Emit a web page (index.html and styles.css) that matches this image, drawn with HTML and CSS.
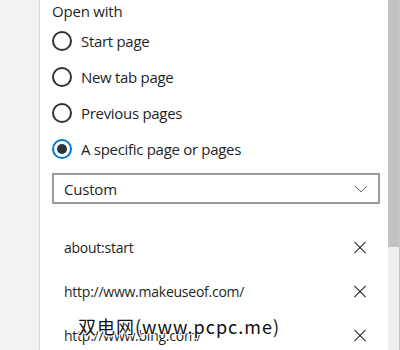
FILE: index.html
```html
<!DOCTYPE html>
<html lang="en">
<head>
    <meta charset="UTF-8">
    <meta name="viewport" content="width=device-width, initial-scale=1.0">
    <title>Open with</title>
    <link rel="stylesheet" href="styles.css">
</head>
<body>
    <div class="app">
        <div class="sidebar"></div>

        <div class="panel">
            <p class="heading">Open with</p>

            <label class="option"><span class="radio"></span>Start page</label>
            <label class="option"><span class="radio"></span>New tab page</label>
            <label class="option"><span class="radio"></span>Previous pages</label>
            <label class="option"><span class="radio checked"></span>A specific page or pages</label>

            <div class="select">
                <span>Custom</span>
                <svg width="14" height="8" viewBox="0 0 14 8">
                    <path d="M1 1 L7 7 L13 1" fill="none" stroke="#666" stroke-width="1"/>
                </svg>
            </div>

            <div class="pages">
                <div class="page"><span>about:start</span><span class="remove"></span></div>
                <div class="page"><span>http://www.makeuseof.com/</span><span class="remove"></span></div>
                <div class="page"><span>http://www.bing.com/</span><span class="remove"></span></div>
            </div>
        </div>

        <div class="scrollbar">
            <div class="thumb"></div>
        </div>
    </div>

    <div class="watermark">双电网(www.pcpc.me)</div>
</body>
</html>
```

FILE: styles.css
```css
body {
    margin: 0;
    width: 400px;
    height: 350px;
    overflow: hidden;
    position: relative;
    font-family: "Open Sans", "Noto Sans", sans-serif;
    color: #1f1f1f;
    background: #fff;
}

.app {
    display: flex;
    height: 350px;
}

.sidebar {
    width: 39px;
    background-color: #f2f2f2;
    border-right: 1px solid #d9d9d9;
}

.panel {
    flex: 1;
    padding: 0 8px 0 12px;
}

.heading {
    margin: 0;
    height: 23px;
    font-size: 15px;
    line-height: 22px;
    letter-spacing: -0.2px;
}

.option {
    display: flex;
    align-items: center;
    height: 36px;
    font-size: 15px;
    letter-spacing: -0.3px;
}

.radio {
    box-sizing: border-box;
    width: 20px;
    height: 20px;
    border: 2px solid #333;
    border-radius: 50%;
    margin-right: 9px;
    display: flex;
    justify-content: center;
    align-items: center;
}

.radio.checked {
    border-color: #0078d7;
}

.radio.checked::after {
    content: "";
    width: 10px;
    height: 10px;
    border-radius: 50%;
    background-color: #333;
}

.select {
    box-sizing: border-box;
    margin-top: 6px;
    height: 31px;
    border: 2px solid #999;
    display: flex;
    justify-content: space-between;
    align-items: center;
    padding: 0 10px 0 10px;
    font-size: 15px;
    letter-spacing: -0.2px;
}

.pages {
    margin-top: 21px;
}

.page {
    display: flex;
    justify-content: space-between;
    align-items: center;
    height: 44px;
    padding: 0 14px 0 12px;
    font-size: 14px;
    letter-spacing: -0.25px;
}

.remove {
    position: relative;
    width: 12px;
    height: 12px;
}

.remove::before,
.remove::after {
    content: "";
    position: absolute;
    left: -2px;
    top: 5.5px;
    width: 16px;
    height: 1px;
    background-color: #222;
    transform: rotate(45deg);
}

.remove::after {
    transform: rotate(-45deg);
}

.scrollbar {
    width: 11px;
    background-color: #f0f0f0;
    border-right: 1px solid #8fe3d8;
}

.thumb {
    height: 247px;
    background-color: #c2c2c2;
}

.watermark {
    position: absolute;
    left: 78px;
    top: 313px;
    font-family: "Noto Sans CJK SC", "Liberation Sans", sans-serif;
    font-size: 18px;
    color: #111;
    letter-spacing: 1px;
    text-shadow: 1px 1px 0 #fff, -1px -1px 0 #fff, 1px -1px 0 #fff, -1px 1px 0 #fff;
}
```
